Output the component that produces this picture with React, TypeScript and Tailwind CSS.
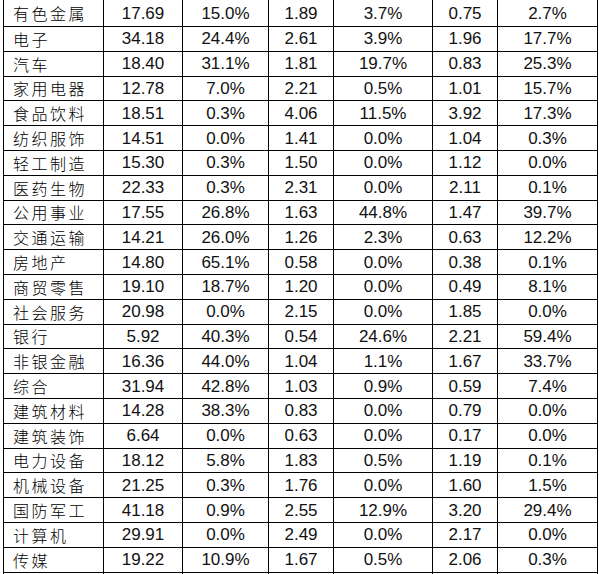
const rows: string[][] = [
  ["有色金属", "17.69", "15.0%", "1.89", "3.7%", "0.75", "2.7%"],
  ["电子", "34.18", "24.4%", "2.61", "3.9%", "1.96", "17.7%"],
  ["汽车", "18.40", "31.1%", "1.81", "19.7%", "0.83", "25.3%"],
  ["家用电器", "12.78", "7.0%", "2.21", "0.5%", "1.01", "15.7%"],
  ["食品饮料", "18.51", "0.3%", "4.06", "11.5%", "3.92", "17.3%"],
  ["纺织服饰", "14.51", "0.0%", "1.41", "0.0%", "1.04", "0.3%"],
  ["轻工制造", "15.30", "0.3%", "1.50", "0.0%", "1.12", "0.0%"],
  ["医药生物", "22.33", "0.3%", "2.31", "0.0%", "2.11", "0.1%"],
  ["公用事业", "17.55", "26.8%", "1.63", "44.8%", "1.47", "39.7%"],
  ["交通运输", "14.21", "26.0%", "1.26", "2.3%", "0.63", "12.2%"],
  ["房地产", "14.80", "65.1%", "0.58", "0.0%", "0.38", "0.1%"],
  ["商贸零售", "19.10", "18.7%", "1.20", "0.0%", "0.49", "8.1%"],
  ["社会服务", "20.98", "0.0%", "2.15", "0.0%", "1.85", "0.0%"],
  ["银行", "5.92", "40.3%", "0.54", "24.6%", "2.21", "59.4%"],
  ["非银金融", "16.36", "44.0%", "1.04", "1.1%", "1.67", "33.7%"],
  ["综合", "31.94", "42.8%", "1.03", "0.9%", "0.59", "7.4%"],
  ["建筑材料", "14.28", "38.3%", "0.83", "0.0%", "0.79", "0.0%"],
  ["建筑装饰", "6.64", "0.0%", "0.63", "0.0%", "0.17", "0.0%"],
  ["电力设备", "18.12", "5.8%", "1.83", "0.5%", "1.19", "0.1%"],
  ["机械设备", "21.25", "0.3%", "1.76", "0.0%", "1.60", "1.5%"],
  ["国防军工", "41.18", "0.9%", "2.55", "12.9%", "3.20", "29.4%"],
  ["计算机", "29.91", "0.0%", "2.49", "0.0%", "2.17", "0.0%"],
  ["传媒", "19.22", "10.9%", "1.67", "0.5%", "2.06", "0.3%"],
];

function Row({ cells, first, filler }: { cells: string[]; first?: boolean; filler?: boolean }) {
  return (
    <div
      className={
        "grid shrink-0 grid-cols-[100px_79px_86px_65px_99px_65px_100px] " +
        (first ? "h-[27px] border-b border-black" : filler ? "h-[30px]" : "h-[24.8px] border-b border-black")
      }
    >
      {cells.map((c, i) =>
        i === 0 ? (
          <div
            key={i}
            className="flex items-center border-l border-black pl-[9px] font-['Noto_Sans_CJK_SC',sans-serif] text-[16px] font-light tracking-[2.5px] text-black"
          >
            {c}
          </div>
        ) : (
          <div
            key={i}
            className="flex items-center justify-center border-l border-black font-['Liberation_Sans',Arial,sans-serif] text-[17px] text-[#111]"
          >
            {c}
          </div>
        )
      )}
    </div>
  );
}

export default function App() {
  return (
    <div className="h-[574px] w-[599px] overflow-hidden bg-white">
      <div className="ml-[3px] flex w-[595px] flex-col border-r border-black leading-none">
        {rows.map((r, i) => (
          <Row key={r[0]} cells={r} first={i === 0} />
        ))}
        <Row cells={["", "", "", "", "", "", ""]} filler />
      </div>
    </div>
  );
}
